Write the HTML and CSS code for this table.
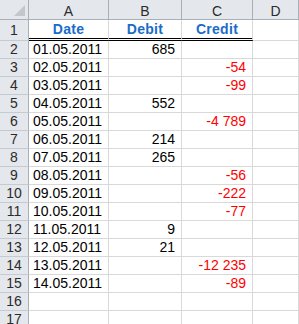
FILE: index.html
```html
<!DOCTYPE html>
<html>
<head>
<meta charset="utf-8">
<link rel="stylesheet" href="styles.css">
</head>
<body>
<div class="sheet">
  <div class="corner"><span class="tri"></span></div>
  <div class="colhdr">A</div>
  <div class="colhdr">B</div>
  <div class="colhdr">C</div>
  <div class="colhdr">D</div>

  <div class="rowhdr r1">1</div>
  <div class="cell r1 dbl title">Date</div>
  <div class="cell r1 dbl title">Debit</div>
  <div class="cell r1 dbl title">Credit</div>
  <div class="cell r1"></div>

  <div class="rowhdr">2</div><div class="cell">01.05.2011</div><div class="cell num">685</div><div class="cell"></div><div class="cell"></div>
  <div class="rowhdr">3</div><div class="cell">02.05.2011</div><div class="cell"></div><div class="cell num neg">-54</div><div class="cell"></div>
  <div class="rowhdr">4</div><div class="cell">03.05.2011</div><div class="cell"></div><div class="cell num neg">-99</div><div class="cell"></div>
  <div class="rowhdr">5</div><div class="cell">04.05.2011</div><div class="cell num">552</div><div class="cell"></div><div class="cell"></div>
  <div class="rowhdr">6</div><div class="cell">05.05.2011</div><div class="cell"></div><div class="cell num neg">-4 789</div><div class="cell"></div>
  <div class="rowhdr">7</div><div class="cell">06.05.2011</div><div class="cell num">214</div><div class="cell"></div><div class="cell"></div>
  <div class="rowhdr">8</div><div class="cell">07.05.2011</div><div class="cell num">265</div><div class="cell"></div><div class="cell"></div>
  <div class="rowhdr">9</div><div class="cell">08.05.2011</div><div class="cell"></div><div class="cell num neg">-56</div><div class="cell"></div>
  <div class="rowhdr">10</div><div class="cell">09.05.2011</div><div class="cell"></div><div class="cell num neg">-222</div><div class="cell"></div>
  <div class="rowhdr">11</div><div class="cell">10.05.2011</div><div class="cell"></div><div class="cell num neg">-77</div><div class="cell"></div>
  <div class="rowhdr">12</div><div class="cell">11.05.2011</div><div class="cell num">9</div><div class="cell"></div><div class="cell"></div>
  <div class="rowhdr">13</div><div class="cell">12.05.2011</div><div class="cell num">21</div><div class="cell"></div><div class="cell"></div>
  <div class="rowhdr">14</div><div class="cell">13.05.2011</div><div class="cell"></div><div class="cell num neg">-12 235</div><div class="cell"></div>
  <div class="rowhdr">15</div><div class="cell">14.05.2011</div><div class="cell"></div><div class="cell num neg">-89</div><div class="cell"></div>
  <div class="rowhdr">16</div><div class="cell"></div><div class="cell"></div><div class="cell"></div><div class="cell"></div>
  <div class="rowhdr">17</div><div class="cell"></div><div class="cell"></div><div class="cell"></div><div class="cell"></div>
</div>
</body>
</html>
```

FILE: styles.css
```css
html, body {
  margin: 0;
  padding: 0;
  background: #ffffff;
  overflow: hidden;
}

.sheet {
  display: grid;
  grid-template-columns: 29px 80px 73px 71px 1fr;
  grid-template-rows: 20px 21px repeat(16, 18px);
  width: 299px;
  font-family: "Liberation Sans", Arial, sans-serif;
  font-size: 14px;
  color: #000;
}

.sheet > div {
  box-sizing: border-box;
  overflow: hidden;
  white-space: nowrap;
}

.corner {
  position: relative;
  background: #e4e7ec;
  border-right: 1px solid #a9afb7;
  border-bottom: 1px solid #a9afb7;
}

.tri {
  position: absolute;
  right: 3px;
  bottom: 3px;
  width: 0;
  height: 0;
  border-left: 11px solid transparent;
  border-bottom: 11px solid #c3c7cd;
}

.colhdr {
  background: #e4e7ec;
  border-right: 1px solid #a9afb7;
  border-bottom: 1px solid #a9afb7;
  text-align: center;
  color: #2b2b2b;
  font-size: 14px;
  line-height: 18px;
  padding-top: 2px;
}

.rowhdr {
  background: #e4e7ec;
  border-right: 1px solid #a9afb7;
  border-bottom: 1px solid #c6cbd2;
  text-align: center;
  color: #2b2b2b;
  font-size: 14px;
  line-height: 17px;
}

.rowhdr.r1 {
  line-height: 18px;
  padding-top: 1px;
}

.cell {
  border-right: 1px solid #d9d9d9;
  border-bottom: 1px solid #d9d9d9;
  line-height: 17px;
  padding-left: 4px;
}

.cell.r1 {
  line-height: 18px;
}

.cell.dbl {
  border-bottom: 3px double #000;
}

.title {
  text-align: center;
  font-weight: bold;
  color: #1a6cc8;
  padding-left: 0;
  letter-spacing: 0.3px;
}

.num {
  text-align: right;
  padding-right: 6px;
}

.neg {
  color: #ff0000;
}
```
